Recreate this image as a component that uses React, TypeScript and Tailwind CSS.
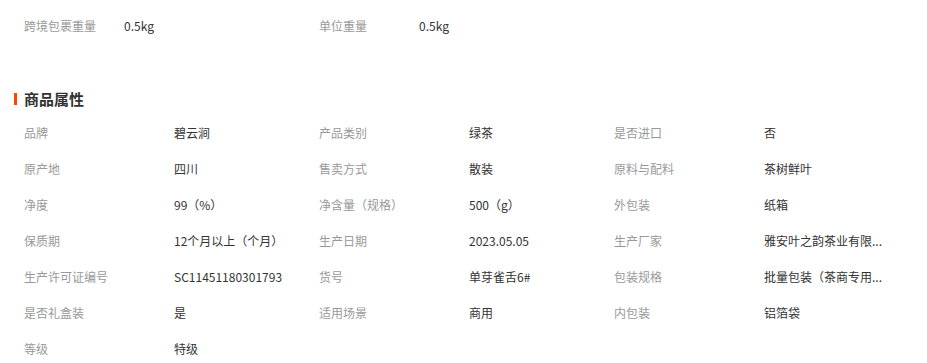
const topInfo = [
  { label: "跨境包裹重量", value: "0.5kg" },
  { label: "单位重量", value: "0.5kg" },
];

// long values are shown already shortened, as on the page
const attrs = [
  ["品牌", "碧云涧"],
  ["产品类别", "绿茶"],
  ["是否进口", "否"],
  ["原产地", "四川"],
  ["售卖方式", "散装"],
  ["原料与配料", "茶树鲜叶"],
  ["净度", "99（%）"],
  ["净含量（规格）", "500（g）"],
  ["外包装", "纸箱"],
  ["保质期", "12个月以上（个月）"],
  ["生产日期", "2023.05.05"],
  ["生产厂家", "雅安叶之韵茶业有限..."],
  ["生产许可证编号", "SC11451180301793"],
  ["货号", "单芽雀舌6#"],
  ["包装规格", "批量包装（茶商专用..."],
  ["是否礼盒装", "是"],
  ["适用场景", "商用"],
  ["内包装", "铝箔袋"],
  ["等级", "特级"],
];

export default function App() {
  return (
    <div
      className="w-[927px] h-[363px] bg-white overflow-hidden pt-2 text-xs"
      style={{ fontFamily: '"Noto Sans CJK SC", "Noto Sans", sans-serif' }}
    >
      <div className="flex h-9 items-center pl-6">
        {topInfo.map((item) => (
          <div key={item.label} className="flex w-[295px] items-center">
            <span className="w-[100px] text-[#999]">{item.label}</span>
            <span className="text-[#333]">{item.value}</span>
          </div>
        ))}
      </div>

      <div className="mt-[45px] flex h-5 items-center pl-[14px]">
        <span className="h-3 w-[3px] bg-[#ff4400]" />
        <h3 className="ml-[7px] text-[15px] font-bold text-[#333]">商品属性</h3>
      </div>

      <div className="mt-1.5 grid grid-cols-[295px_295px_295px] pl-6">
        {attrs.map(([label, value]) => (
          <div key={label} className="flex h-9 items-center">
            <span className="w-[150px] shrink-0 text-[#999]">{label}</span>
            <span className="whitespace-nowrap text-[#333]">{value}</span>
          </div>
        ))}
      </div>
    </div>
  );
}
